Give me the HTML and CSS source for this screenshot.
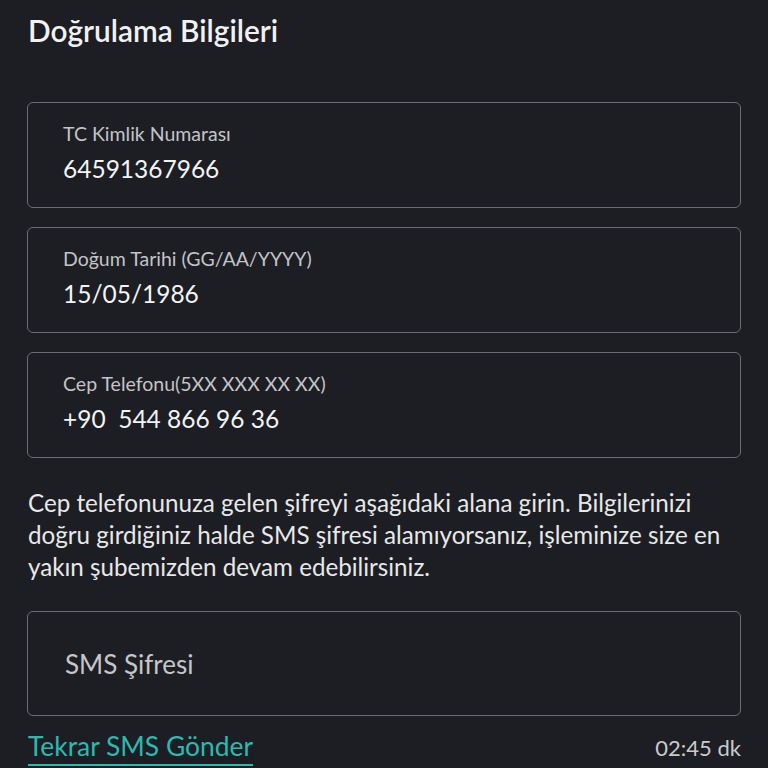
FILE: index.html
```html
<!DOCTYPE html>
<html lang="tr">
<head>
<meta charset="utf-8">
<title>Doğrulama Bilgileri</title>
<link rel="stylesheet" href="styles.css">
</head>
<body>
<main class="page">
  <h1 class="title">Doğrulama Bilgileri</h1>

  <div class="field">
    <span class="field-label">TC Kimlik Numarası</span>
    <span class="field-value">64591367966</span>
  </div>
  <div class="field">
    <span class="field-label">Doğum Tarihi (GG/AA/YYYY)</span>
    <span class="field-value">15/05/1986</span>
  </div>
  <div class="field">
    <span class="field-label">Cep Telefonu(5XX XXX XX XX)</span>
    <span class="field-value">+90&nbsp; 544 866 96 36</span>
  </div>

  <p class="info">Cep telefonunuza gelen şifreyi aşağıdaki alana girin. Bilgilerinizi<br>doğru girdiğiniz halde SMS şifresi alamıyorsanız, işleminize size en<br>yakın şubemizden devam edebilirsiniz.</p>

  <div class="field field-input">
    <span class="placeholder">SMS Şifresi</span>
  </div>

  <div class="footer">
    <a class="resend" href="#">Tekrar SMS Gönder</a>
    <span class="timer">02:45 dk</span>
  </div>
</main>
</body>
</html>
```

FILE: styles.css
```css
* { box-sizing: border-box; }

html, body {
  margin: 0;
  background: #1c1e24;
}

body {
  font-family: Lato, "Noto Sans", sans-serif;
  color: #eeeeee;
}

.page {
  width: 768px;
  height: 768px;
  overflow: hidden;
  padding: 14px 27px 0 27px;
  display: flex;
  flex-direction: column;
}

.title {
  margin: 0 0 54px 1px;
  font-size: 29.8px;
  line-height: 34px;
  font-weight: 600;
  color: #f1f1f1;
}

.field {
  height: 106px;
  border: 1.5px solid #6a6d73;
  border-radius: 6px;
  padding: 0 0 3px 35px;
  display: flex;
  flex-direction: column;
  justify-content: center;
  gap: 9px;
  margin-bottom: 19px;
  flex-shrink: 0;
}

.field-label {
  font-size: 19.5px;
  line-height: 22px;
  color: #c3c4c7;
}

.field-value {
  font-size: 24.5px;
  line-height: 30px;
  color: #f3f3f3;
}

.info {
  margin: 10px -27px 28px 1px;
  font-size: 24.2px;
  line-height: 32px;
  color: #e8e8e8;
  white-space: nowrap;
}

.field-input {
  height: 105px;
  margin-bottom: 15px;
  padding: 0 0 0 37px;
}

.placeholder {
  font-size: 26px;
  line-height: 30px;
  color: #c6c6c8;
}

.footer {
  display: flex;
  justify-content: space-between;
  align-items: baseline;
  padding-left: 1px;
}

.resend {
  font-size: 26.4px;
  line-height: 30px;
  color: #2bbab2;
  text-decoration: underline;
  text-decoration-thickness: 2px;
  text-underline-offset: 8px;
}

.timer {
  font-size: 22px;
  line-height: 30px;
  color: #cacacc;
}
```
